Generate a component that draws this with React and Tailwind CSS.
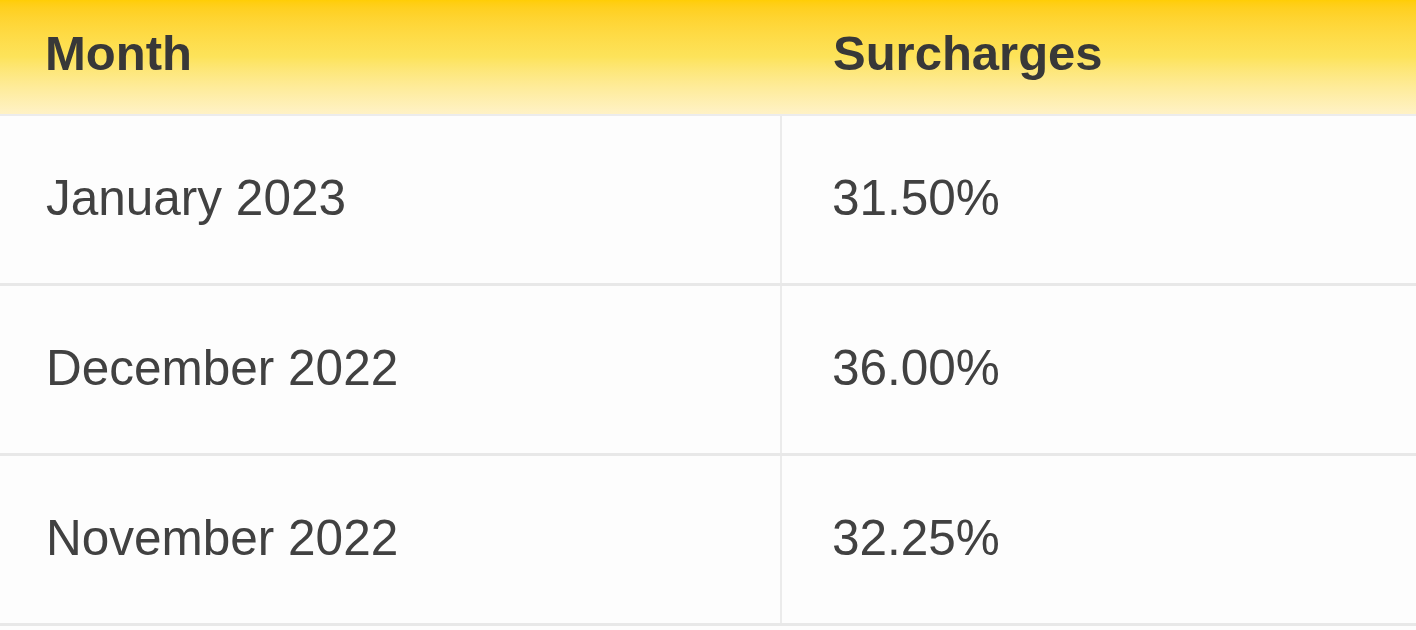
import React from 'react';

const rows = [
  { month: 'January 2023', surcharge: '31.50%' },
  { month: 'December 2022', surcharge: '36.00%' },
  { month: 'November 2022', surcharge: '32.25%' },
];

export default function App() {
  return (
    <div className="w-[1416px] h-[630px] overflow-hidden bg-[#fdfdfd] font-['Liberation_Sans',Arial,sans-serif] text-[#414141]">
      {/* header */}
      <div className="grid grid-cols-[782px_1fr] h-[116px] bg-gradient-to-b from-[#ffcd05] via-[#fde35a] to-[#fff2c6] border-b-2 border-[#ececec]">
        <div className="flex items-center pl-[45px] pb-[6px] text-[49px] font-bold text-[#383838]">Month</div>
        <div className="flex items-center pl-[51px] pb-[6px] text-[49px] font-bold text-[#383838]">Surcharges</div>
      </div>

      {rows.map((r) => (
        <div key={r.month} className="grid grid-cols-[782px_1fr] h-[170px] border-b-[3px] border-[#e8e8e8]">
          <div className="flex items-center pl-[46px] pb-[2px] text-[49.5px] border-r-2 border-[#ebebeb]">{r.month}</div>
          <div className="flex items-center pl-[50px] pb-[2px] text-[49.5px]">{r.surcharge}</div>
        </div>
      ))}
    </div>
  );
}
